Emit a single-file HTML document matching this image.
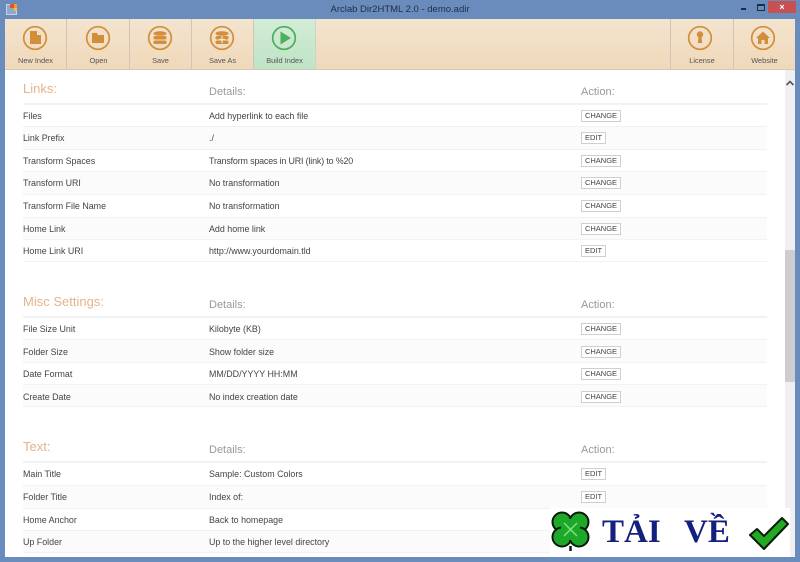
<!DOCTYPE html>
<html><head><meta charset="utf-8">
<style>
html,body{margin:0;padding:0}
body{width:800px;height:562px;overflow:hidden;position:relative;background:#6a8cbc;font-family:"Liberation Sans",sans-serif;color:#444}
div{position:absolute;box-sizing:border-box}
#root{left:0;top:0;width:800px;height:562px;filter:blur(.35px);background:#6a8cbc;overflow:hidden}
#content{left:5px;top:70px;width:790px;height:487px;background:#fff;overflow:hidden}
#bar{left:5px;top:19px;width:790px;height:51px;background:linear-gradient(#f3e4cf,#f0d8b9);border-bottom:1px solid #d6c9b6}
.b{top:19px;height:50px;width:62px;border-right:1px solid #cfc6b6;text-align:center}
.b span{position:absolute;left:0;right:0;top:37px;font-size:7.4px;color:#555;white-space:nowrap}
.b svg{position:absolute;left:17px;top:6px}
.t{font-size:8.9px;white-space:nowrap;color:#444;margin-top:1px}
.h{font-size:13px;color:#e4b48a;left:23px;white-space:nowrap;margin-top:2px}
.d{font-size:11px;color:#999;white-space:nowrap;margin-top:1px}
.btn{left:581px;height:12px;border:1px solid #cfcfcf;background:#fff;font-size:7.5px;line-height:10px;text-align:center;color:#444}
.c{width:40px}.e{width:25px}
.line{left:23px;width:744px;height:2px;background:#f2f2f2}
.alt{left:23px;width:744px;background:#fbfbfb}
</style></head><body>
<div id="root">
<svg style="position:absolute;left:6px;top:4px" width="11" height="11"><rect x="0.5" y="0.5" width="10" height="10" fill="#8fa8cc" stroke="#c8d4e4"/><rect x="4" y="0" width="4" height="4" fill="#e2552a"/><rect x="8" y="0" width="3" height="4" fill="#f09a30"/><rect x="8" y="4" width="3" height="3" fill="#f4c040"/></svg>
<div style="left:0;right:0;top:4px;text-align:center;font-size:9.5px;color:#1f2d44">Arclab Dir2HTML 2.0 - demo.adir</div>
<div style="left:741px;top:8px;width:5px;height:2px;background:#1c2c44"></div>
<div style="left:757px;top:4px;width:8px;height:7px;border:1px solid #1c2c44;border-top-width:2px"></div>
<div style="left:768px;top:1px;width:28px;height:12px;background:#c75050;color:#fff;font-size:9px;line-height:12px;text-align:center;font-weight:bold">×</div>

<div id="bar"></div>
<div style="left:253px;top:19px;width:63px;height:50px;background:linear-gradient(#d3ecd6,#bfe3c6)"></div>

<div class="b" style="left:5px"><svg width="26" height="26"><circle cx="13" cy="13" r="11.300" fill="none" stroke="#d18f3c" stroke-width="1.700"/><path d="M8 6h7l4 4v9H8z" fill="#d18f3c"/><path d="M15 6v4h4" fill="#f3e4cf"/></svg><span>New Index</span></div>
<div class="b" style="left:68px"><svg width="26" height="26"><circle cx="13" cy="13" r="11.300" fill="none" stroke="#d18f3c" stroke-width="1.700"/><path d="M7 8h5l1 2h6v8H7z" fill="#d18f3c"/></svg><span>Open</span></div>
<div class="b" style="left:130px"><svg width="26" height="26"><circle cx="13" cy="13" r="11.300" fill="none" stroke="#d18f3c" stroke-width="1.700"/><ellipse cx="13" cy="8.500" rx="6.500" ry="2.300" fill="#d18f3c"/><rect x="6.500" y="11" width="13" height="3.500" rx="1.500" fill="#d18f3c"/><rect x="6.500" y="15.500" width="13" height="3.500" rx="1.500" fill="#d18f3c"/></svg><span>Save</span></div>
<div class="b" style="left:192px"><svg width="26" height="26"><circle cx="13" cy="13" r="11.300" fill="none" stroke="#d18f3c" stroke-width="1.700"/><ellipse cx="13" cy="8.500" rx="6.500" ry="2.300" fill="#d18f3c"/><rect x="6.500" y="11" width="13" height="3.500" rx="1.500" fill="#d18f3c"/><rect x="6.500" y="15.500" width="13" height="3.500" rx="1.500" fill="#d18f3c"/><path d="M13 11v7M10 14.500h6" stroke="#f3e4cf" stroke-width="1.200"/></svg><span>Save As</span></div>
<div class="b" style="left:254px;border-right:1px solid #c5d8c0"><svg width="26" height="26"><circle cx="13" cy="13" r="11.300" fill="none" stroke="#4cae5e" stroke-width="1.700"/><path d="M9.500 6.500L20 13 9.500 19.500z" fill="#4cae5e"/></svg><span>Build Index</span></div>
<div class="b" style="left:670px;border-left:1px solid #cfc6b6;width:64px"><svg width="26" height="26" style="left:16px"><circle cx="13" cy="13" r="11.300" fill="none" stroke="#d18f3c" stroke-width="1.700"/><circle cx="13" cy="9.500" r="3.200" fill="#d18f3c"/><path d="M11.800 10h2.400l1 8h-4.400z" fill="#d18f3c"/></svg><span>License</span></div>
<div class="b" style="left:733px;width:62px;border-right:0;border-left:1px solid #cfc6b6"><svg width="26" height="26" style="left:16px"><circle cx="13" cy="13" r="11.300" fill="none" stroke="#d18f3c" stroke-width="1.700"/><path d="M13 6.500L20 13h-2v6h-3.500v-4h-3v4H8v-6H6z" fill="#d18f3c"/></svg><span>Website</span></div>

<div id="content"></div>

<div class="alt" style="top:127px;height:22px"></div>
<div class="alt" style="top:172px;height:22px"></div>
<div class="alt" style="top:217px;height:22px"></div>
<div class="alt" style="top:340px;height:22px"></div>
<div class="alt" style="top:385px;height:22px"></div>
<div class="alt" style="top:485px;height:23px"></div>
<div class="alt" style="top:530px;height:22px"></div>

<div class="h" style="top:79px">Links:</div><div class="d" style="left:209px;top:85px">Details:</div><div class="d" style="left:581px;top:85px">Action:</div>
<div class="line" style="top:103px"></div>
<div class="line" style="top:126px;height:1px"></div><div class="line" style="top:149px;height:1px"></div><div class="line" style="top:171px;height:1px"></div><div class="line" style="top:194px;height:1px"></div><div class="line" style="top:217px;height:1px"></div><div class="line" style="top:239px;height:1px"></div><div class="line" style="top:261px;height:1px"></div>
<div class="t" style="left:23px;top:110px">Files</div><div class="t" style="left:209px;top:110px">Add hyperlink to each file</div><div class="btn c" style="top:110px">CHANGE</div>
<div class="t" style="left:23px;top:132px">Link Prefix</div><div class="t" style="left:209px;top:132px">./</div><div class="btn e" style="top:132px">EDIT</div>
<div class="t" style="left:23px;top:155px">Transform Spaces</div><div class="t" style="left:209px;top:155px;letter-spacing:-.15px">Transform spaces in URI (link) to %20</div><div class="btn c" style="top:155px">CHANGE</div>
<div class="t" style="left:23px;top:177px">Transform URI</div><div class="t" style="left:209px;top:177px">No transformation</div><div class="btn c" style="top:177px">CHANGE</div>
<div class="t" style="left:23px;top:200px">Transform File Name</div><div class="t" style="left:209px;top:200px">No transformation</div><div class="btn c" style="top:200px">CHANGE</div>
<div class="t" style="left:23px;top:223px">Home Link</div><div class="t" style="left:209px;top:223px">Add home link</div><div class="btn c" style="top:223px">CHANGE</div>
<div class="t" style="left:23px;top:245px">Home Link URI</div><div class="t" style="left:209px;top:245px">http://www.yourdomain.tld</div><div class="btn e" style="top:245px">EDIT</div>

<div class="h" style="top:292px">Misc Settings:</div><div class="d" style="left:209px;top:298px">Details:</div><div class="d" style="left:581px;top:298px">Action:</div>
<div class="line" style="top:316px"></div>
<div class="line" style="top:339px;height:1px"></div><div class="line" style="top:362px;height:1px"></div><div class="line" style="top:384px;height:1px"></div><div class="line" style="top:406px;height:1px"></div>
<div class="t" style="left:23px;top:323px">File Size Unit</div><div class="t" style="left:209px;top:323px">Kilobyte (KB)</div><div class="btn c" style="top:323px">CHANGE</div>
<div class="t" style="left:23px;top:346px">Folder Size</div><div class="t" style="left:209px;top:346px">Show folder size</div><div class="btn c" style="top:346px">CHANGE</div>
<div class="t" style="left:23px;top:368px">Date Format</div><div class="t" style="left:209px;top:368px">MM/DD/YYYY HH:MM</div><div class="btn c" style="top:368px">CHANGE</div>
<div class="t" style="left:23px;top:391px">Create Date</div><div class="t" style="left:209px;top:391px">No index creation date</div><div class="btn c" style="top:391px">CHANGE</div>

<div class="h" style="top:437px">Text:</div><div class="d" style="left:209px;top:443px">Details:</div><div class="d" style="left:581px;top:443px">Action:</div>
<div class="line" style="top:461px"></div>
<div class="line" style="top:485px;height:1px"></div><div class="line" style="top:508px;height:1px"></div><div class="line" style="top:530px;height:1px"></div><div class="line" style="top:552px;height:1px"></div>
<div class="t" style="left:23px;top:468px">Main Title</div><div class="t" style="left:209px;top:468px">Sample: Custom Colors</div><div class="btn e" style="top:468px">EDIT</div>
<div class="t" style="left:23px;top:491px">Folder Title</div><div class="t" style="left:209px;top:491px">Index of:</div><div class="btn e" style="top:491px">EDIT</div>
<div class="t" style="left:23px;top:514px">Home Anchor</div><div class="t" style="left:209px;top:514px">Back to homepage</div>
<div class="t" style="left:23px;top:536px">Up Folder</div><div class="t" style="left:209px;top:536px">Up to the higher level directory</div>

<div style="left:785px;top:70px;width:10px;height:487px;background:#f0f0f0"></div>
<div style="left:785px;top:250px;width:10px;height:132px;background:#cdcdcd"></div>
<svg style="position:absolute;left:785px;top:79px" width="10" height="8"><path d="M1.500 6L5 2.500 8.500 6" fill="none" stroke="#555" stroke-width="1.600"/></svg>

<div style="left:550px;top:508px;width:240px;height:49px;background:#fff"></div>
<svg style="position:absolute;left:550px;top:510px" width="42" height="42" viewBox="0 0 42 42"><g fill="#1ea82a" stroke="#0a1a0a" stroke-width="2"><circle cx="12" cy="12" r="9.500"/><circle cx="29" cy="12" r="9.500"/><circle cx="12" cy="27" r="9.500"/><circle cx="29" cy="27" r="9.500"/></g><rect x="11" y="9" width="19" height="21" fill="#1ea82a"/><path d="M14 13l13 13M27 13L14 26" stroke="#7fe080" stroke-width="1.500"/><path d="M20.500 36v5" stroke="#0a1a0a" stroke-width="2.500"/></svg>
<div style="left:602px;top:514px;font-family:'Liberation Serif',serif;font-size:33px;font-weight:bold;color:#14207e;white-space:nowrap;line-height:36px">TẢI</div>
<div style="left:684px;top:514px;font-family:'Liberation Serif',serif;font-size:33px;font-weight:bold;color:#14207e;white-space:nowrap;line-height:36px">VỀ</div>
<svg style="position:absolute;left:748px;top:516px" width="42" height="36" viewBox="0 0 42 36"><path d="M2 19l7-6 7 7L34 2l6 6-24 25z" fill="#22aa22" stroke="#0a1a0a" stroke-width="2" stroke-linejoin="round"/></svg>
</div>
</body></html>
